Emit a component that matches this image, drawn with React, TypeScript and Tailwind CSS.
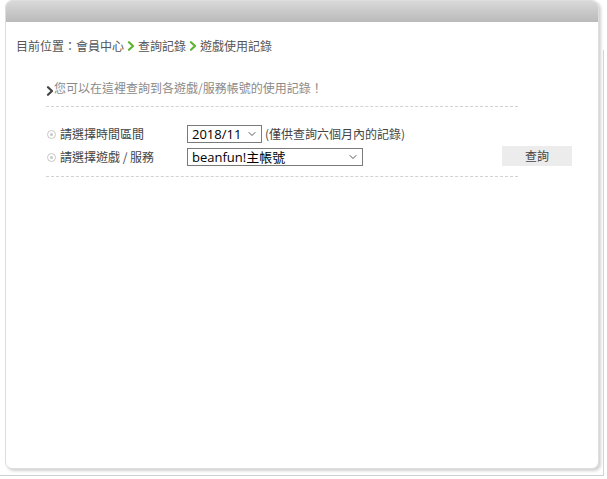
import { ChevronDown } from 'lucide-react'

const cjk = '"Noto Sans CJK TC", "Noto Sans", sans-serif'

function Arrow({ color, className }: { color: string; className?: string }) {
  return (
    <svg width="8" height="10" viewBox="0 0 8 10" className={className}>
      <path d="M2 1.2 L6 5 L2 8.8" fill="none" stroke={color} strokeWidth="2.2" strokeLinecap="round" strokeLinejoin="round" />
    </svg>
  )
}

function Radio() {
  return (
    <span className="inline-flex size-[9px] items-center justify-center rounded-full border border-[#c8c8c8] bg-white">
      <span className="size-[3px] rounded-full bg-[#c8c8c8]" />
    </span>
  )
}

function Select({ value, width }: { value: string; width: string }) {
  return (
    <div
      className={`flex h-[18px] items-center justify-between border border-[#7a7a7a] bg-white pl-[4px] pr-[3px] text-[13px] leading-none text-black ${width}`}
      style={{ fontFamily: '"Open Sans", "Noto Sans CJK TC", sans-serif' }}
    >
      <span>{value}</span>
      <ChevronDown className="size-[12px] text-[#444]" strokeWidth={1.8} />
    </div>
  )
}

export default function App() {
  return (
    <div className="relative h-[479px] w-[607px] overflow-hidden bg-white" style={{ fontFamily: cjk }}>
      {/* outer frame lines at right and bottom */}
      <div className="absolute right-[3px] top-[50px] bottom-[4px] w-px bg-[#d4d4d4]" />
      <div className="absolute left-0 right-[3px] bottom-[3px] h-px bg-[#cfcfcf]" />

      <div className="ml-[5px] flex h-[469px] w-[594px] flex-col overflow-hidden rounded-[7px] border border-[#dedede] bg-white shadow-[2px_2px_3px_rgba(0,0,0,0.18)]">
        <div className="h-[21px] shrink-0 bg-gradient-to-b from-[#d9d9d9] to-[#bababa]" />

        <div className="flex flex-col pl-[10px] pt-[14px]">
          <div className="flex items-center text-[12px] leading-[20px] text-[#555]">
            <span>目前位置：會員中心</span>
            <Arrow color="#5bb531" className="mx-[3px]" />
            <span>查詢記錄</span>
            <Arrow color="#5bb531" className="mx-[3px]" />
            <span>遊戲使用記錄</span>
          </div>

          <div className="ml-[30px] w-[472px]">
            <div className="mt-[23px] flex items-center text-[12px] leading-[18px] text-[#8a8a8a]">
              <Arrow color="#444" className="mt-[5px]" />
              <span>您可以在這裡查詢到各遊戲/服務帳號的使用記錄！</span>
            </div>
            <div className="mt-[9px] border-t border-dashed border-[#d2d2d2]" />

            <div className="mt-[18px] flex flex-col gap-[5px] pl-[1px]">
              <div className="flex items-center text-[12px] text-[#444]">
                <div className="flex w-[140px] items-center gap-[4px]">
                  <Radio />
                  <span>請選擇時間區間</span>
                </div>
                <Select value="2018/11" width="w-[75px]" />
                <span className="ml-[3px]">(僅供查詢六個月內的記錄)</span>
              </div>
              <div className="flex items-center text-[12px] text-[#444]">
                <div className="flex w-[140px] items-center gap-[4px]">
                  <Radio />
                  <span>請選擇遊戲 / 服務</span>
                </div>
                <Select value="beanfun!主帳號" width="w-[176px]" />
              </div>
            </div>
            <div className="mt-[10px] border-t border-dashed border-[#d2d2d2]" />
          </div>
        </div>
      </div>

      <button className="absolute left-[502px] top-[146px] h-[20px] w-[70px] bg-[#ececec] text-[12px] text-[#444]">
        查詢
      </button>
    </div>
  )
}
